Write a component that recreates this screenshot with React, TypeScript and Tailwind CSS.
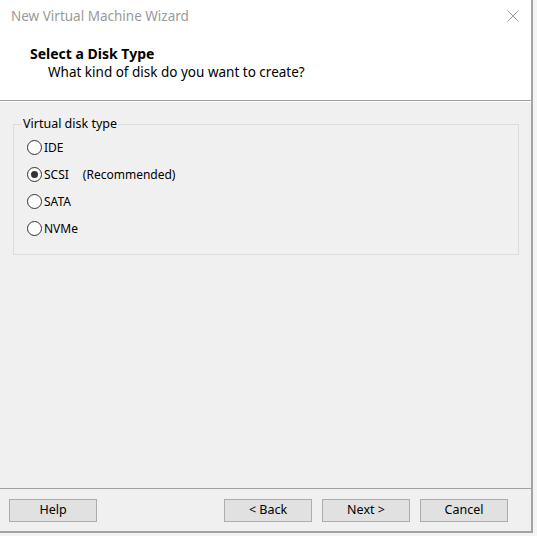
import React from 'react';

const font = { fontFamily: '"Noto Sans", "Open Sans", sans-serif' };

type Option = { id: string; label: string; note?: string };

const options: Option[] = [
    { id: 'ide', label: 'IDE' },
    { id: 'scsi', label: 'SCSI', note: '(Recommended)' },
    { id: 'sata', label: 'SATA' },
    { id: 'nvme', label: 'NVMe' },
];

function Radio({ checked }: { checked: boolean }) {
    return (
        <span className="w-[15px] h-[15px] rounded-full border border-[#333333] bg-white flex items-center justify-center shrink-0">
            {checked && <span className="w-[7px] h-[7px] rounded-full bg-[#333333]" />}
        </span>
    );
}

function WizButton({ children, className = '' }: { children: React.ReactNode; className?: string }) {
    return (
        <button
            className={`h-[23px] w-[88px] bg-[#e1e1e1] border border-[#adadad] text-[12.5px] text-black leading-none ${className}`}
        >
            {children}
        </button>
    );
}

export default function App() {
    const [selected, setSelected] = React.useState('scsi');

    return (
        <div className="w-[537px] h-[536px] bg-[#f4f4f4] overflow-hidden" style={font}>
            <div className="w-[533px] h-[533px] flex flex-col border-r-2 border-b-2 border-[#a3a3a3]">
                {/* Header */}
                <div className="h-[100px] bg-white flex flex-col">
                    <div className="h-[32px] flex items-center justify-between pl-[11px] pr-[12px]">
                        <span className="text-[13.5px] text-[#9a9a9a]">New Virtual Machine Wizard</span>
                        <svg width="12" height="12" viewBox="0 0 12 12" className="mt-[-1px]">
                            <path d="M0.5 0.5 L11.5 11.5 M11.5 0.5 L0.5 11.5" stroke="#9a9a9a" strokeWidth="1" />
                        </svg>
                    </div>
                    <div className="pl-[30px] pt-[13px]">
                        <div className="text-[14px] font-bold text-black leading-[18px]">Select a Disk Type</div>
                        <div className="text-[13.5px] text-black leading-[18px] pl-[18px]">
                            What kind of disk do you want to create?
                        </div>
                    </div>
                </div>
                <div className="h-px bg-[#a0a0a0]" />
                <div className="h-px bg-white" />

                {/* Body */}
                <div className="flex-1 bg-[#f0f0f0] pl-[13px] pr-[12px] pt-[14px]">
                    <fieldset className="border border-[#dcdcdc] h-[139px]">
                        <legend className="ml-[8px] px-[1px] text-[12.5px] text-black leading-[16px]">
                            Virtual disk type
                        </legend>
                        <div className="flex flex-col gap-[10px] mt-[7px] pl-[13px]">
                            {options.map((o) => (
                                <label
                                    key={o.id}
                                    onClick={() => setSelected(o.id)}
                                    className="flex items-center h-[17px] text-[12px] text-black cursor-default"
                                >
                                    <Radio checked={selected === o.id} />
                                    <span className="ml-[2px]">{o.label}</span>
                                    {o.note && <span className="ml-[14px]">{o.note}</span>}
                                </label>
                            ))}
                        </div>
                    </fieldset>
                </div>

                {/* Footer */}
                <div className="h-px bg-[#a0a0a0]" />
                <div className="h-[42px] bg-[#f0f0f0] flex items-start pt-[10px] pl-[9px]">
                    <WizButton>Help</WizButton>
                    <WizButton className="ml-[127px]">&lt; Back</WizButton>
                    <WizButton className="ml-[10px]">Next &gt;</WizButton>
                    <WizButton className="ml-[10px]">Cancel</WizButton>
                </div>
            </div>
        </div>
    );
}
